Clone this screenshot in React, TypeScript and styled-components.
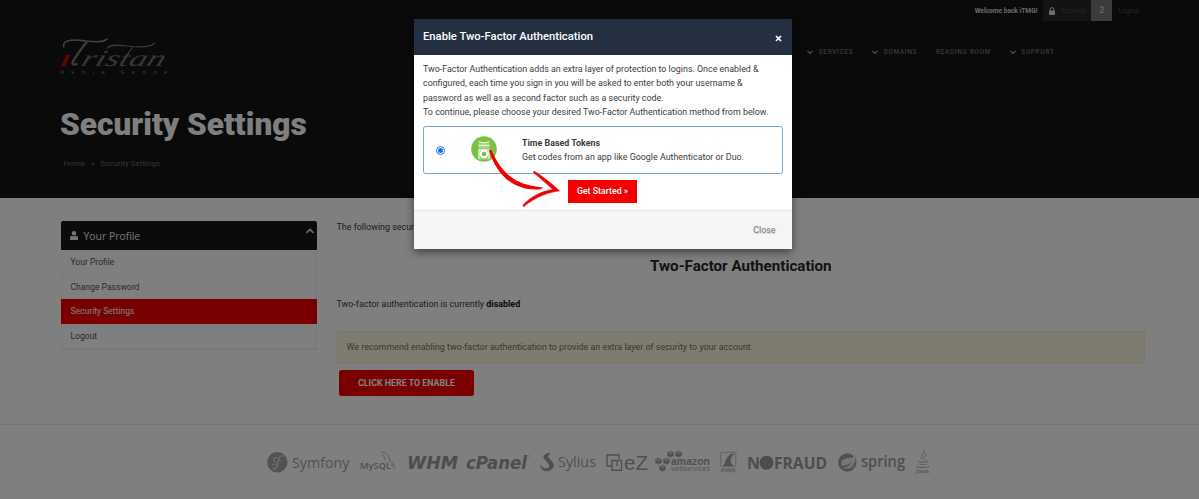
import React from "react";
import styled, { createGlobalStyle } from "styled-components";

const GlobalStyle = createGlobalStyle`
  * { box-sizing: border-box; }
  body {
    margin: 0;
    font-family: Roboto, "Liberation Sans", sans-serif;
    font-size: 8.88px;
    color: #3c3c3c;
    background: #fff;
  }
`;

const Page = styled.div`
  position: relative;
  width: 1199px;
  height: 499px;
  overflow: hidden;
  background: #fff;
`;

const Header = styled.header`
  height: 198px;
  background: #141414;
  padding-left: 60px;
`;

const TopBar = styled.div`
  display: flex;
  justify-content: flex-end;
  align-items: center;
  height: 21px;
  padding-right: 60px;
  font-size: 6.6px;
  color: #4c4c4c;
`;

const Welcome = styled.span`
  margin-right: 6px;
  font-weight: 700;
  font-size: 6.6px;
  color: #d8d8d8;
`;

const AccountLink = styled.span`
  display: flex;
  align-items: center;
  gap: 5px;
  width: 48px;
  height: 21px;
  padding-left: 6px;
  background: #262626;
  letter-spacing: 0.2px;
`;

const Count = styled.span`
  width: 21px;
  height: 21px;
  line-height: 21px;
  margin-right: 6px;
  text-align: center;
  font-size: 9px;
  font-weight: 700;
  background: #777;
  color: #c4c4c4;
`;

const Brand = styled.div`
  display: flex;
  justify-content: space-between;
  height: 62px;
`;

const BrandLogo = styled.svg`
  width: 112px;
  height: 42px;
  margin-top: 15px;
  overflow: visible;
`;

const Nav = styled.nav`
  display: flex;
  align-items: center;
  gap: 18.8px;
  height: 62px;
  padding-right: 144.5px;
  font-size: 6.3px;
  font-weight: 500;
  letter-spacing: 0.75px;
  color: #747474;
  text-transform: uppercase;
`;

const NavItem = styled.span`
  display: flex;
  align-items: center;
  gap: 5.5px;
`;

const PageTitle = styled.h1`
  margin: 21px 0 0;
  font-size: 31.6px;
  line-height: 42px;
  font-weight: 900;
  color: #fff;
`;

const Crumbs = styled.div`
  display: flex;
  gap: 5.5px;
  margin-top: 12px;
  padding-left: 3.5px;
  font-size: 8px;
  line-height: 12px;
  color: #6a6a6a;
`;

const Content = styled.main`
  display: flex;
  align-items: flex-start;
  gap: 19.5px;
  height: 227px;
  padding: 23px 54px 0 61px;
  border-bottom: 1px solid #ececec;
`;

const Sidebar = styled.aside`
  width: 256px;
  flex: none;
  border-radius: 2px 2px 0 0;
  overflow: hidden;
  border-bottom: 1px solid #eaeaea;
`;

const SidebarTitle = styled.div`
  display: flex;
  align-items: center;
  height: 29px;
  padding: 0 3px 0 9px;
  gap: 5.5px;
  background: #161616;
  color: #e8e8e8;
  font-family: "Open Sans", sans-serif;
  font-size: 10.4px;

  svg:last-child {
    margin: -10px 0 0 auto;
  }
`;

const SidebarItem = styled.div<{ $active?: boolean }>`
  height: 24.7px;
  line-height: 24.7px;
  padding-left: 8.5px;
  font-size: 8.55px;
  border: 1px solid ${(p) => (p.$active ? "#f20000" : "#f4f4f4")};
  border-top: 0;
  background: ${(p) => (p.$active ? "#f20000" : "transparent")};
  color: ${(p) => (p.$active ? "#fff" : "#555")};
`;

const Main = styled.section`
  flex: 1;
  font-size: 8.92px;
`;

const Para = styled.p`
  margin: 0;
  line-height: 12px;

  b { color: #111; }
`;

const Section = styled.h2`
  margin: 23px 0 22px;
  text-align: center;
  font-size: 15.15px;
  line-height: 20px;
  font-weight: 700;
  color: #262626;
`;

const Alert = styled.div`
  height: 33px;
  margin-top: 21px;
  padding-left: 9px;
  line-height: 30px;
  border: 1px solid #f8efca;
  border-radius: 2px;
  background: #fcf8e3;
  background-clip: padding-box;
  color: #7d7042;
`;

const EnableButton = styled.button`
  display: block;
  width: 135px;
  height: 26px;
  margin: 6px 0 0 2.5px;
  padding: 0 0 1px;
  border: 0;
  border-radius: 2.5px;
  background: #f40000;
  color: #fff;
  font: 700 8.85px Roboto, sans-serif;
`;

const Partners = styled.footer`
  display: flex;
  gap: 10px;
  height: 74px;
  padding: 24px 0 0 267px;
`;

const PartnerLogo = styled.svg`
  flex: none;
  height: 26px;
  overflow: visible;
`;

const Backdrop = styled.div`
  position: absolute;
  inset: 0;
  padding: 19px 0 0 414px;
  background: rgba(0, 0, 0, 0.5);
`;

const Dialog = styled.div`
  position: relative;
  width: 378px;
  height: 230px;
  background: #fff;
  border-radius: 1px;
  box-shadow: 0 3px 9px rgba(0, 0, 0, 0.5);
`;

const DialogHeader = styled.div`
  display: flex;
  align-items: center;
  justify-content: space-between;
  height: 36px;
  padding: 0 10px 2px 9px;
  background: #242f42;
  color: #fff;
  font-size: 11.25px;
  font-weight: 500;

  svg { margin-top: 5px; }
`;

const DialogBody = styled.div`
  height: 155px;
  padding: 6.5px 9px 0;
  line-height: 14.6px;
`;

const Method = styled.div`
  display: flex;
  align-items: center;
  width: 360px;
  height: 48px;
  margin-top: 6.5px;
  padding-left: 12px;
  border: 1px solid #7ea6c2;
  border-radius: 2.5px;
`;

const Radio = styled.span`
  display: grid;
  place-items: center;
  width: 9px;
  height: 9px;
  border: 1px solid #1576d2;
  border-radius: 50%;

  &::after {
    content: "";
    width: 5px;
    height: 5px;
    border-radius: 50%;
    background: #1576d2;
  }
`;

const TokenIcon = styled.svg`
  width: 26px;
  height: 26px;
  margin: -3px 25px 0 26px;
`;

const GetStarted = styled.button`
  display: block;
  width: 69px;
  height: 23px;
  margin: 6px 0 0 145px;
  padding: 0 0 1px;
  border: 0;
  background: #f40000;
  color: #fff;
  font: 500 8.8px Roboto, sans-serif;
`;

const DialogFooter = styled.div`
  display: flex;
  align-items: center;
  justify-content: flex-end;
  height: 39px;
  padding-right: 16.5px;
  border-top: 1px solid #e8e8e8;
  background: #f5f5f5;
  color: #808080;
  text-shadow: 0.5px 0.5px 0 #d0d0d0;
`;

const Arrow = styled.svg`
  position: absolute;
  left: 74px;
  top: 126px;
  width: 76px;
  height: 66px;
`;

const Chevron = ({ up = false, size = 6, color = "#aaa" }: { up?: boolean; size?: number; color?: string }) => (
  <svg width={size} height={size} viewBox="0 0 6 6" fill="none" stroke={color} strokeWidth="1.2">
    <path d={up ? "M.4 4.4 3 1.8l2.6 2.6" : "M.4 1.8 3 4.4l2.6-2.6"} />
  </svg>
);

const navItems = [
  { label: "Services", menu: true },
  { label: "Domains", menu: true },
  { label: "Reading Room", menu: false },
  { label: "Support", menu: true },
];

const sidebarItems = ["Your Profile", "Change Password", "Security Settings", "Logout"];

const serif = "Liberation Serif, serif";
const sans = "Open Sans, sans-serif";
const wide = "DejaVu Sans, sans-serif";

const BrandMark = () => (
  <BrandLogo viewBox="0 0 112 42">
    <text transform="translate(0 29.5) skewX(-16)" fontFamily={serif} fontStyle="italic" fontWeight="700" fontSize="24" fill="#d00000" textLength="8" lengthAdjust="spacingAndGlyphs">ı</text>
    <path d="M4 11.500C1.500 5 10 3 22 4.500c11 1.500 23 2 25.500-2" fill="none" stroke="#8a8a8a" strokeWidth="1.600" />
    <path d="M27 5.500C22 12 14 22 12.500 27q0 3 5 .5" fill="none" stroke="#777" strokeWidth="2.400" />
    <path d="M47 12.500c3-4.500 12-3.500 20-2.500 12 1.500 24 1 28-3" fill="none" stroke="#747474" strokeWidth="1.200" />
    <path d="M73 10.500 66 20" fill="none" stroke="#6c6c6c" strokeWidth="1.200" />
    <text transform="translate(20 29.500) skewX(-20)" fontFamily={serif} fontStyle="italic" fontSize="23" fill="#6c6c6c" textLength="83" lengthAdjust="spacingAndGlyphs">ristan</text>
    <text x="0" y="37.500" fontFamily={wide} fontSize="4.600" fill="#8c8c8c" textLength="107">MEDIA GROUP</text>
  </BrandLogo>
);

const PartnerLogos = () => (
  <Partners>
    <PartnerLogo width="83" viewBox="0 0 83 26">
      <circle cx="10.3" cy="13.2" r="10.2" fill="#a4a4a4" />
      <path d="M16 8.500c.3-2.500-3-2.300-3.800.5L10 17.500c-.8 3-3.500 3-4 1M10.500 9.500C9 7.500 6 9 6.500 11c.4 1.500 2.700 1.700 2.500 3.500-.3 2-3.500 2-3.500.2M10.300 11.500h4" fill="none" stroke="#e0e0e0" strokeWidth="1.2" />
      <text x="25" y="18.500" fontFamily={sans} fontSize="15" fill="#a0a0a0" textLength="57.500" lengthAdjust="spacingAndGlyphs">Symfony</text>
    </PartnerLogo>
    <PartnerLogo width="37" viewBox="0 0 37 26">
      <text x="0" y="19.500" fontFamily={sans} fontSize="9" fontWeight="600" fill="#a0a0a0" textLength="31" lengthAdjust="spacingAndGlyphs">MySQL</text>
      <path d="M21.5 3c4-1 7 3 8 8 1 3 4 3 5 6l-3-1 4 4M23 5c0 2 2 3 2 6" fill="none" stroke="#b5b5b5" strokeWidth=".9" />
    </PartnerLogo>
    <PartnerLogo width="49" viewBox="0 0 49 26">
      <text x="0" y="19.500" fontFamily={wide} fontStyle="italic" fontWeight="700" fontSize="18.500" fill="#9a9a9a" textLength="51" lengthAdjust="spacingAndGlyphs">WHM</text>
    </PartnerLogo>
    <PartnerLogo width="64" viewBox="0 0 64 26">
      <text x="0" y="19.500" fontFamily={wide} fontStyle="italic" fontWeight="700" fontSize="17" fill="#9a9a9a" textLength="61" lengthAdjust="spacingAndGlyphs">cPanel</text>
      <circle cx="63" cy="7" r=".7" fill="#aaa" />
    </PartnerLogo>
    <PartnerLogo width="56" viewBox="0 0 56 26">
      <path d="M9.8 4.500C2 5 3 9.200 7 12.400c4.800 4.500 2.600 8-1.800 7.300-2-.3-3.200-1.800-4.500-3 1 5 5.500 6 9.200 4.300 5.500-2.600 3.500-7.200 0-10.500C7.400 8.200 7.100 6.400 9.800 4.500Z" fill="#9f9f9f" stroke="#9f9f9f" />
      <text x="18" y="17.500" fontFamily={sans} fontSize="14" fill="#a0a0a0" textLength="38" lengthAdjust="spacingAndGlyphs">Sylius</text>
    </PartnerLogo>
    <PartnerLogo width="39" viewBox="0 0 39 26">
      <path d="M5 17H1V6h12v4M6 11.500h9.500v9.700H6zM6 11.500h5V17" fill="none" stroke="#a0a0a0" strokeWidth="1.4" />
      <text x="18" y="20.500" fontFamily="Liberation Sans, sans-serif" fontSize="20" fill="#a0a0a0" textLength="24" lengthAdjust="spacingAndGlyphs">eZ</text>
    </PartnerLogo>
    <PartnerLogo width="55" viewBox="0 0 55 26">
      {[[12, 2], [20, 2], [0, 9], [8, 9], [4, 16]].map(([x, y]) => (
        <path key={`${x}-${y}`} d={`M${x + 3.5} ${y}l3 1.4v3.4l-3 1.5-3-1.5V${y + 1.4}ZM${x + 0.5} ${y + 1.4}l3 1.3 3-1.3m-3 1.3v3.5`} fill="#9e9e9e" stroke="#b8b8b8" strokeWidth=".7" />
      ))}
      <text x="16" y="16.200" fontFamily="Liberation Sans, sans-serif" fontSize="11" fontWeight="700" fill="#a2a2a2" textLength="39" lengthAdjust="spacingAndGlyphs">amazon</text>
      <text x="16" y="22" fontFamily="Liberation Sans, sans-serif" fontSize="6.500" fill="#adadad" textLength="39" lengthAdjust="spacingAndGlyphs">webservices</text>
    </PartnerLogo>
    <PartnerLogo width="17" viewBox="0 0 17 26">
      <path d="M.8 18V3.300h15V18" fill="none" stroke="#b0b0b0" strokeWidth=".8" />
      <path d="M2 17.500c4-2 2-7 7-11 2-2 4-2 6-1-3 1-5 4-4 8 .5 2 2 3 4 4Z" fill="#a0a0a0" />
      <text x=".5" y="22.500" fontFamily={sans} fontSize="5" fontWeight="700" fill="#aaa" textLength="15" lengthAdjust="spacingAndGlyphs">AVAJA</text>
    </PartnerLogo>
    <PartnerLogo width="81" viewBox="0 0 81 26">
      <text x="0" y="19.500" fontFamily={sans} fontWeight="700" fontSize="16" fill="#9a9a9a" textLength="13" lengthAdjust="spacingAndGlyphs">N</text>
      <circle cx="19.500" cy="13.800" r="7" fill="#9b9b9b" />
      <text x="27" y="19.500" fontFamily={sans} fontWeight="700" fontSize="16" fill="#9a9a9a" textLength="53" lengthAdjust="spacingAndGlyphs">FRAUD</text>
    </PartnerLogo>
    <PartnerLogo width="67" viewBox="0 0 67 26">
      <circle cx="9.300" cy="13.500" r="9.200" fill="#a2a2a2" />
      <path d="M16.500 6.500c-2 3-5 2.500-8 3-4 .7-6 3-5 7 3 .3 8-.5 10.500-4.500-1 4-5 7-10 7 6 1.500 12 0 13.500-5 .7-2.500.3-5-1-7.500Z" fill="#fff" opacity=".85" />
      <path d="M17.500 4c1.500 6 1 13-5.500 14.300 5-3 6.500-8 5.500-14.300Z" fill="#a2a2a2" />
      <text x="23" y="18" fontFamily={sans} fontWeight="600" fontSize="16" fill="#9e9e9e" textLength="44" lengthAdjust="spacingAndGlyphs">spring</text>
    </PartnerLogo>
    <PartnerLogo width="16" viewBox="0 0 16 26">
      <path d="M9 1c2 3-5 5-2 9M12 5C8 7 9 9 9 11M3 12.500c2 1 7 1 10-.5M4 15c3 1 6 1 8 0M1 17.500c4 1.500 10 1.500 13 0" fill="none" stroke="#aaa" strokeWidth=".9" />
      <text x="1" y="23.500" fontFamily={sans} fontSize="6" fontWeight="600" fill="#a5a5a5" textLength="13" lengthAdjust="spacingAndGlyphs">Java</text>
    </PartnerLogo>
  </Partners>
);

export default function App() {
  return (
    <Page>
      <GlobalStyle />
      <Header>
        <TopBar>
          <Welcome>Welcome back iTMG!</Welcome>
          <AccountLink>
            <svg width="6" height="8" viewBox="0 0 6 8">
              <path d="M0 3.500h6V8H0z" fill="#ddd" />
              <path d="M1.300 4V2.300a1.700 1.700 0 0 1 3.400 0V4" fill="none" stroke="#ddd" />
            </svg>
            Account
          </AccountLink>
          <Count>2</Count>
          Logout
        </TopBar>
        <Brand>
          <BrandMark />
          <Nav>
            {navItems.map((item) => (
              <NavItem key={item.label}>
                {item.menu && <Chevron />}
                {item.label}
              </NavItem>
            ))}
          </Nav>
        </Brand>
        <PageTitle>Security Settings</PageTitle>
        <Crumbs>
          <span>Home</span>
          <span>&gt;</span>
          <span>Security Settings</span>
        </Crumbs>
      </Header>
      <Content>
        <Sidebar>
          <SidebarTitle>
            <svg width="8" height="9" viewBox="0 0 8 9" fill="#e8e8e8">
              <circle cx="4" cy="2.300" r="2.200" />
              <path d="M0 9V7q0-2.200 2-2.200 2 1 4 0 2 0 2 2.200v2Z" />
            </svg>
            Your Profile
            <Chevron up size={8} color="#ddd" />
          </SidebarTitle>
          {sidebarItems.map((label) => (
            <SidebarItem key={label} $active={label === "Security Settings"}>{label}</SidebarItem>
          ))}
        </Sidebar>
        <Main>
          <Para>The following security settings are available.</Para>
          <Section>Two-Factor Authentication</Section>
          <Para>Two-factor authentication is currently <b>disabled</b></Para>
          <Alert>We recommend enabling two-factor authentication to provide an extra layer of security to your account.</Alert>
          <EnableButton>CLICK HERE TO ENABLE</EnableButton>
        </Main>
      </Content>
      <PartnerLogos />
      <Backdrop>
        <Dialog>
          <DialogHeader>
            Enable Two-Factor Authentication
            <svg width="7" height="7" viewBox="0 0 7 7" stroke="#fff" strokeWidth="1.700">
              <path d="m1 1 5 5M6 1 1 6" />
            </svg>
          </DialogHeader>
          <DialogBody>
            Two-Factor Authentication adds an extra layer of protection to logins. Once enabled &amp;<br />
            configured, each time you sign in you will be asked to enter both your username &amp;<br />
            password as well as a second factor such as a security code.<br />
            To continue, please choose your desired Two-Factor Authentication method from below.
            <Method>
              <Radio />
              <TokenIcon viewBox="0 0 26 26">
                <circle cx="13" cy="13" r="12.800" fill="#7cc142" />
                <path d="M7.500 5.500q5.500 2.500 11 0v18h-11Z" fill="#9bd272" />
                <path d="M8 5.500q5 2.500 10 0M7.500 9.500h11M8 23V14h10v9" fill="none" stroke="#e6f5da" strokeWidth="1.300" />
                <circle cx="13" cy="18" r="3.300" fill="#7cc142" stroke="#fff" strokeWidth="2" />
              </TokenIcon>
              <div>
                <b>Time Based Tokens</b><br />
                Get codes from an app like Google Authenticator or Duo.
              </div>
            </Method>
            <GetStarted>Get Started »</GetStarted>
          </DialogBody>
          <DialogFooter>Close</DialogFooter>
          <Arrow viewBox="0 0 76 66" fill="#f00000">
            <path d="M1 5.500c1-1.500 2.500-.5 3 1C13 26 25 38.500 48 41.500q4 .5 7.500 1.300l-4 1.700C26 46 9 31 1 5.500Z" />
            <path d="M46 26c8 5 17 12 25.500 19.800-11 1.500-24 6-36 16l-.5-1.800C43 51.500 54 46 65 44.500 58 38 52 33 45.500 27.500Z" stroke="#f00000" strokeWidth=".6" />
          </Arrow>
        </Dialog>
      </Backdrop>
    </Page>
  );
}
